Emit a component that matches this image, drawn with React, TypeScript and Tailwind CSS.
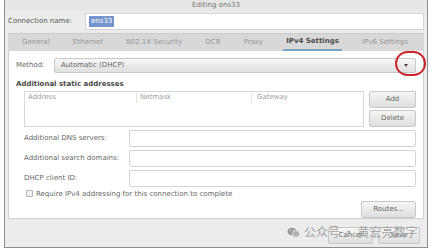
import React from 'react';

const tabs = ['General', 'Ethernet', '802.1X Security', 'DCB', 'Proxy', 'IPv4 Settings', 'IPv6 Settings'];

const Field: React.FC<{ label: string }> = ({ label }) => (
  <div className="flex items-center h-[20px]">
    <span className="w-[105px] text-[7px] text-[#666]">{label}</span>
    <div className="flex-1 h-[17px] bg-white border border-[#d4d4d4] rounded-[2px]" />
  </div>
);

const Btn: React.FC<{ label: string; className?: string }> = ({ label, className = '' }) => (
  <div
    className={`h-[17px] flex items-center justify-center text-[7px] text-[#666] border border-[#c8c8c8] rounded-[2px] bg-gradient-to-b from-[#f6f6f6] to-[#dedede] ${className}`}
  >
    {label}
  </div>
);

export default function App() {
  return (
    <div className="w-[433px] h-[252px] bg-white relative overflow-hidden" style={{ fontFamily: '"DejaVu Sans", sans-serif' }}>
      <div className="ml-[4px] mr-[5px] h-[248px] border-x border-b border-[#8e8e8e] bg-[#ececec] flex flex-col">
        {/* title */}
        <div className="h-[11px] flex items-center justify-center text-[7px] text-[#777] bg-[#e6e6e6]">Editing ens33</div>

        {/* connection name */}
        <div className="flex items-center h-[21px] pl-[3px] pr-[3px]">
          <span className="w-[77px] text-[7px] text-[#555]">Connection name:</span>
          <div className="flex-1 h-[17px] bg-white border border-[#d4d4d4] flex items-center pl-[3px]">
            <span className="text-[7px] text-white bg-[#7394cc] px-[2px]">ens33</span>
          </div>
        </div>

        {/* tabs */}
        <div className="mx-[3px] mt-[1px] h-[18px] bg-[#d8d8d8] flex items-end justify-between pl-[11px] pr-[13px] border-t border-[#cacaca]">
          {tabs.map((t) => (
            <div
              key={t}
              className={`h-[17px] flex items-center px-[3px] text-[7px] ${
                t === 'IPv4 Settings' ? 'font-bold text-[#4a4a4a] border-b-[2px] border-[#7aa3c6]' : 'text-[#959595]'
              }`}
            >
              {t}
            </div>
          ))}
        </div>

        {/* panel */}
        <div className="mx-[3px] h-[168px] bg-white border border-[#d0d0d0] border-t-0 px-[7px] pt-[6px] flex flex-col">
          <div className="flex items-center h-[16px] relative">
            <span className="w-[38px] text-[7px] text-[#666]">Method:</span>
            <div className="flex-1 h-[15px] border border-[#c8c8c8] rounded-[2px] bg-gradient-to-b from-[#f7f7f7] to-[#e0e0e0] flex items-center justify-between pl-[6px] pr-[7px]">
              <span className="text-[7px] text-[#666]">Automatic (DHCP)</span>
              <span className="w-0 h-0 border-l-[2.5px] border-r-[2.5px] border-t-[3px] border-l-transparent border-r-transparent border-t-[#444]" />
            </div>
            <div className="absolute right-[-10px] top-[-6px] w-[31px] h-[25px] rounded-full border-[2px] border-[#c8262c]" />
          </div>

          <div className="mt-[6px] text-[7px] font-bold text-[#4a4a4a]">Additional static addresses</div>

          <div className="flex mt-[1px] pl-[8px] gap-[5px]">
            <div className="flex-1 h-[36px] border border-[#d8d8d8] flex flex-col">
              <div className="flex h-[11px] text-[7px] text-[#a0a0a0]">
                <div className="w-[112px] pl-[3px] border-r border-[#e4e4e4]">Address</div>
                <div className="w-[115px] pl-[3px] border-r border-[#e4e4e4]">Netmask</div>
                <div className="flex-1 pl-[5px]">Gateway</div>
              </div>
            </div>
            <div className="w-[47px] flex flex-col gap-[2px]">
              <Btn label="Add" />
              <Btn label="Delete" />
            </div>
          </div>

          <div className="pl-[8px] mt-[2px] flex flex-col">
            <Field label="Additional DNS servers:" />
            <Field label="Additional search domains:" />
            <Field label="DHCP client ID:" />
          </div>

          <div className="flex items-center pl-[10px] gap-[3px]">
            <div className="w-[7px] h-[7px] border border-[#b4b4b4] rounded-[1px] bg-[#f3f3f3]" />
            <span className="text-[7px] text-[#666]">Require IPv4 addressing for this connection to complete</span>
          </div>

          <div className="flex justify-end mt-[2px]">
            <Btn label="Routes..." className="w-[55px]" />
          </div>
        </div>

        {/* footer */}
        <div className="flex-1 flex items-end justify-end gap-[5px] pr-[7px] pb-[3px] relative">
          <Btn label="Cancel" className="w-[45px] h-[16px]" />
          <Btn label="Save" className="w-[42px] h-[16px]" />
          <div className="absolute left-[282px] top-[7px] flex items-center gap-[4px] text-[#9a9a9a]">
            <svg width="13" height="11" viewBox="0 0 26 22">
              <ellipse cx="10" cy="9" rx="9" ry="7.5" fill="#9a9a9a" />
              <ellipse cx="18" cy="14" rx="7.5" ry="6.5" fill="#b0b0b0" stroke="#fff" strokeWidth="1" />
              <circle cx="7" cy="7" r="1.2" fill="#fff" />
              <circle cx="13" cy="7" r="1.2" fill="#fff" />
            </svg>
            <span className="text-[12px] leading-none opacity-90" style={{ fontFamily: '"Noto Sans CJK SC", sans-serif' }}>
              公众号 · 黄宏亮数字
            </span>
          </div>
        </div>
      </div>
    </div>
  );
}
